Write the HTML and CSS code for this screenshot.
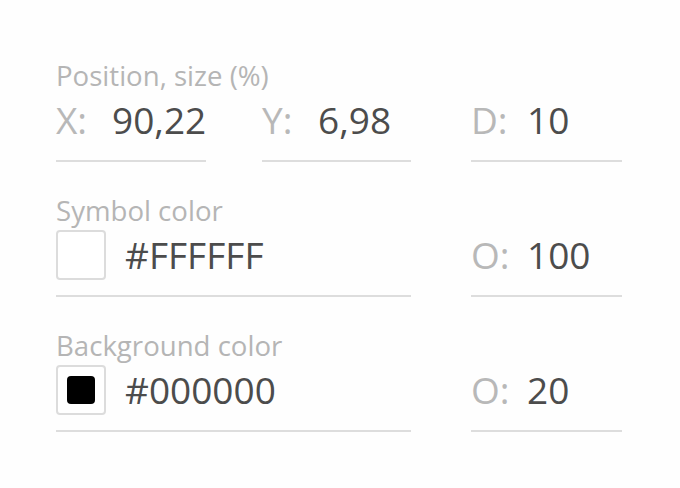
FILE: index.html
```html
<!DOCTYPE html>
<html>
<head>
<meta charset="utf-8">
<link rel="stylesheet" href="styles.css">
</head>
<body>
<div class="panel">
  <section class="group">
    <div class="heading">Position, size (%)</div>
    <div class="fields">
      <div class="field col1"><span class="label">X:</span><span class="value">90,22</span></div>
      <div class="field col3"><span class="label">Y:</span><span class="value">6,98</span></div>
      <div class="field col5"><span class="label">D:</span><span class="value">10</span></div>
    </div>
  </section>
  <section class="group">
    <div class="heading">Symbol color</div>
    <div class="fields">
      <div class="field span12"><span class="swatch"></span><span class="value hex">#FFFFFF</span></div>
      <div class="field col5"><span class="label">O:</span><span class="value">100</span></div>
    </div>
  </section>
  <section class="group">
    <div class="heading">Background color</div>
    <div class="fields">
      <div class="field span12"><span class="swatch"><span class="chip"></span></span><span class="value hex">#000000</span></div>
      <div class="field col5"><span class="label">O:</span><span class="value">20</span></div>
    </div>
  </section>
</div>
</body>
</html>
```
FILE: styles.css
```css
html, body {
  margin: 0;
  padding: 0;
  background: #fefefe;
}
body {
  font-family: "Open Sans", "Liberation Sans", sans-serif;
  width: 680px;
  height: 488px;
  overflow: hidden;
}
.panel {
  padding: 59px 0 0 56px;
  display: flex;
  flex-direction: column;
  gap: 32px;
}
.group {
  display: flex;
  flex-direction: column;
  gap: 4px;
}
.heading {
  font-size: 27.6px;
  line-height: 32px;
  color: #b5b5b5;
}
.fields {
  display: grid;
  grid-template-columns: 150px 56px 149px 60px 151px;
}
.field {
  display: flex;
  align-items: center;
  height: 50px;
  padding-bottom: 15px;
  border-bottom: 2px solid #dddddd;
}
.col1 { grid-column: 1; }
.col3 { grid-column: 3; }
.col5 { grid-column: 5; }
.span12 { grid-column: 1 / 4; }
.label {
  width: 56px;
  flex: none;
  font-size: 37px;
  line-height: 44px;
  color: #b8b8b8;
}
.value {
  font-size: 37px;
  line-height: 44px;
  color: #4c4c4c;
}
.hex {
  margin-left: 19px;
}
.swatch {
  box-sizing: border-box;
  width: 50px;
  height: 50px;
  flex: none;
  border: 2px solid #dcdcdc;
  border-radius: 4px;
  background: #ffffff;
  padding: 9px;
}
.chip {
  display: block;
  width: 28px;
  height: 28px;
  border-radius: 4px;
  background: #000000;
}
```
